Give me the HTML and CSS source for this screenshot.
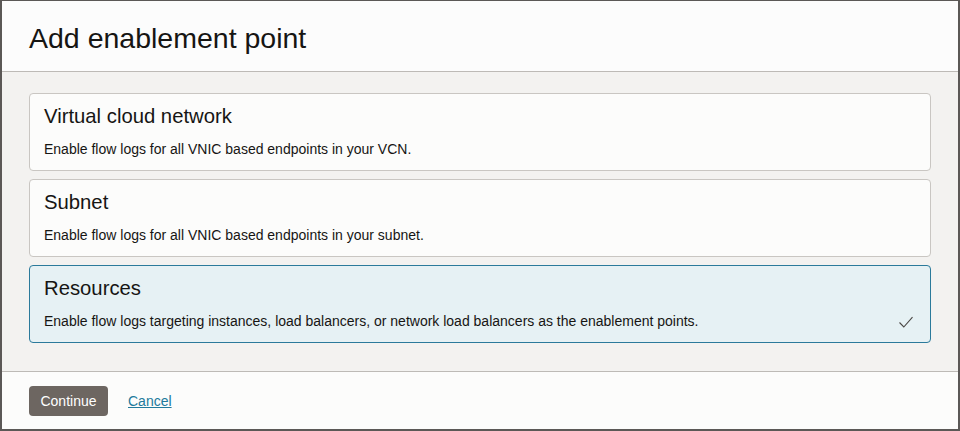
FILE: index.html
```html
<!DOCTYPE html>
<html>
<head>
<meta charset="utf-8">
<link rel="stylesheet" href="styles.css">
</head>
<body>
<div class="frame">
  <header class="head">
    <h1 class="title">Add enablement point</h1>
  </header>
  <main class="body">
    <div class="card">
      <div class="card-title">Virtual cloud network</div>
      <div class="card-desc"><span>Enable flow logs for all VNIC based endpoints in your VCN.</span></div>
    </div>
    <div class="card">
      <div class="card-title">Subnet</div>
      <div class="card-desc"><span>Enable flow logs for all VNIC based endpoints in your subnet.</span></div>
    </div>
    <div class="card selected">
      <div class="card-title">Resources</div>
      <div class="card-desc">
        <span>Enable flow logs targeting instances, load balancers, or network load balancers as the enablement points.</span>
        <svg class="check" width="16" height="13" viewBox="0 0 16 13"><path d="M1.5 6.5 L5.8 11 L14.5 1.2" fill="none" stroke="#4a4744" stroke-width="1.1"/></svg>
      </div>
    </div>
  </main>
  <footer class="foot">
    <button class="btn">Continue</button>
    <a class="link" href="#">Cancel</a>
  </footer>
</div>
</body>
</html>
```
FILE: styles.css
```css
* { box-sizing: border-box; }
html, body { margin: 0; padding: 0; }
body {
  font-family: "Liberation Sans", Arial, sans-serif;
  color: #161513;
  background: #fff;
}
.frame {
  width: 960px;
  height: 431px;
  border-style: solid;
  border-color: #5b5856;
  border-width: 1px 2px 2px 2px;
  display: flex;
  flex-direction: column;
}
.head {
  height: 71px;
  background: #fcfcfc;
  border-bottom: 1px solid #bdbab6;
  padding: 0 27px;
  display: flex;
  align-items: center;
}
.title {
  margin: 0;
  font-size: 28.5px;
  font-weight: normal;
  line-height: 32px;
  padding-top: 4px;
}
.body {
  height: 299px;
  background: #f3f2f0;
  padding: 21px 27px 0 27px;
  display: flex;
  flex-direction: column;
  gap: 8px;
}
.card {
  width: 902px;
  height: 78px;
  flex: none;
  background: #fcfcfb;
  border: 1px solid #c9c6c2;
  border-radius: 4px;
  padding: 10px 16px 0 14px;
}
.card.selected {
  background: #e6f1f4;
  border-color: #2b7a9b;
}
.card-title {
  font-size: 20.3px;
  line-height: 24px;
}
.card-desc {
  margin-top: 12px;
  font-size: 14px;
  line-height: 18px;
  display: flex;
  justify-content: space-between;
  align-items: center;
}
.check { display: block; margin-top: 2px; }
.foot {
  flex: 1;
  background: #fcfcfb;
  border-top: 1px solid #bdbab6;
  padding: 14px 27px 0 27px;
  display: flex;
  align-items: flex-start;
  gap: 20px;
}
.btn {
  height: 30px;
  width: 79px;
  padding: 0;
  border: none;
  border-radius: 4px;
  background: #6d6661;
  color: #fff;
  font-family: "Liberation Sans", Arial, sans-serif;
  font-size: 14px;
}
.link {
  color: #227a9c;
  font-size: 14px;
  line-height: 30px;
  text-decoration: underline;
}
```
